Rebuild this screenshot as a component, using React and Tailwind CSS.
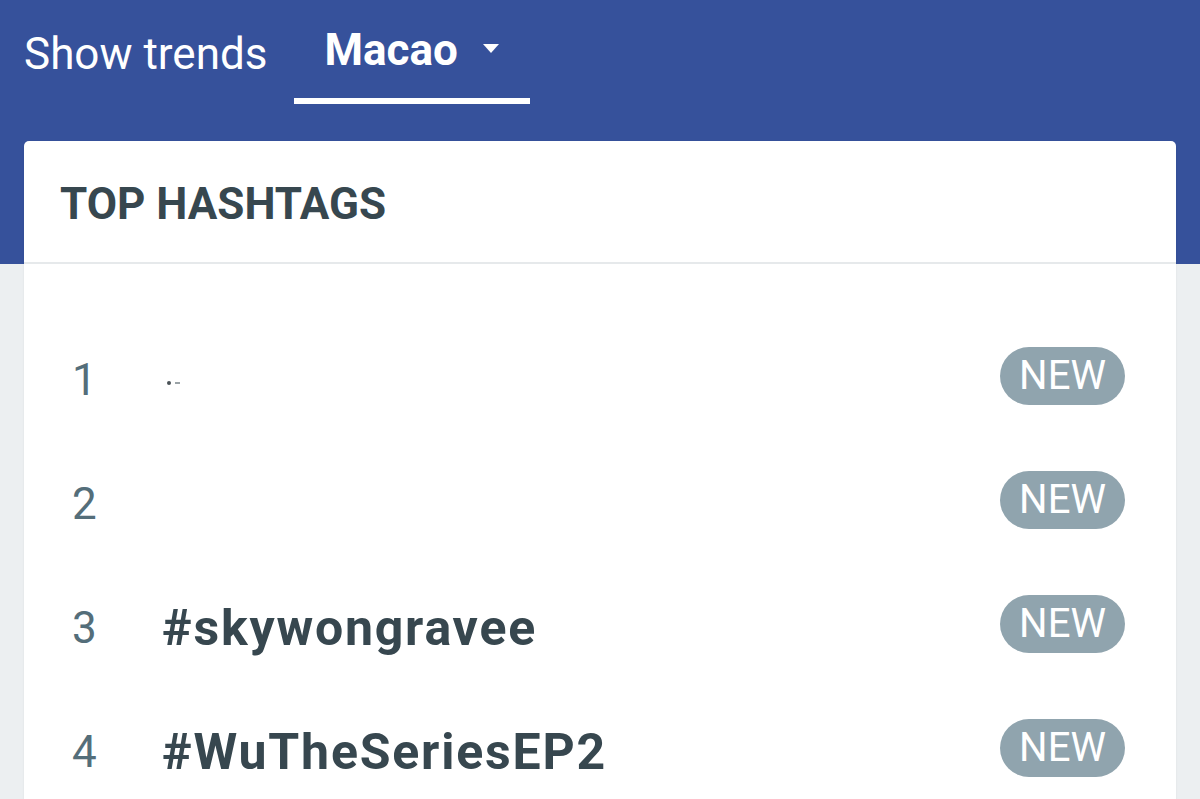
import React from "react";

const trends = [
  { rank: 1, tag: null, faint: true },
  { rank: 2, tag: null },
  { rank: 3, tag: "#skywongravee" },
  { rank: 4, tag: "#WuTheSeriesEP2" },
];

function App() {
  return (
    <div
      className="relative min-h-[799px] w-[1200px] overflow-hidden bg-[#eceff1]"
      style={{ fontFamily: "Roboto, 'Liberation Sans', sans-serif" }}
    >
      <div className="absolute inset-x-0 top-0 h-[264px] bg-[#36519b]" />

      <div className="relative">
        <div className="flex h-[141px] items-start pl-6">
          <div className="pt-[28px] text-[44px] leading-[52px] text-white">Show trends</div>
          <div className="ml-[27px] flex flex-col">
            <div className="flex items-center px-[30px] pt-[24px]">
              <span className="text-[44px] font-bold leading-[52px] text-white">Macao</span>
              <svg width="16" height="9" viewBox="0 0 16 9" className="ml-[25px] mt-[-4px]">
                <path d="M0 0h16L8 9z" fill="#fff" />
              </svg>
            </div>
            <div className="mt-[22px] h-[6px] w-[236px] bg-white" />
          </div>
        </div>

        <div className="mx-6 rounded-t-[5px] bg-white shadow-[0_1px_2px_rgba(0,0,0,0.08)]">
          <div className="flex h-[123px] items-center border-b-2 border-[#e6e9eb] pl-9 pt-[4px]">
            <h2 className="text-[44px] font-bold text-[#37474f]">TOP HASHTAGS</h2>
          </div>

          <ul className="pt-[54px]">
            {trends.map((t) => (
              <li key={t.rank} className="flex h-[124px] items-center pl-12 pr-[51px]">
                <span className="w-[90px] text-[44px] text-[#546e7a]">{t.rank}</span>
                <span className="flex-1 text-[50px] font-bold tracking-[1.8px] text-[#37474f]">
                  {t.tag ? (
                    t.tag
                  ) : t.faint ? (
                    <span className="ml-[5px] inline-flex items-center gap-[4px] align-middle">
                      <span className="h-[4px] w-[4px] rounded-full bg-[#4a5257]" />
                      <span className="h-[2px] w-[5px] bg-[#9aa2a6]" />
                    </span>
                  ) : null}
                </span>
                <span className="mb-[8px] flex h-[58px] w-[125px] items-center justify-center rounded-full bg-[#90a4ae] text-[40px] text-white">
                  NEW
                </span>
              </li>
            ))}
          </ul>
        </div>
      </div>
    </div>
  );
}

export default App;
